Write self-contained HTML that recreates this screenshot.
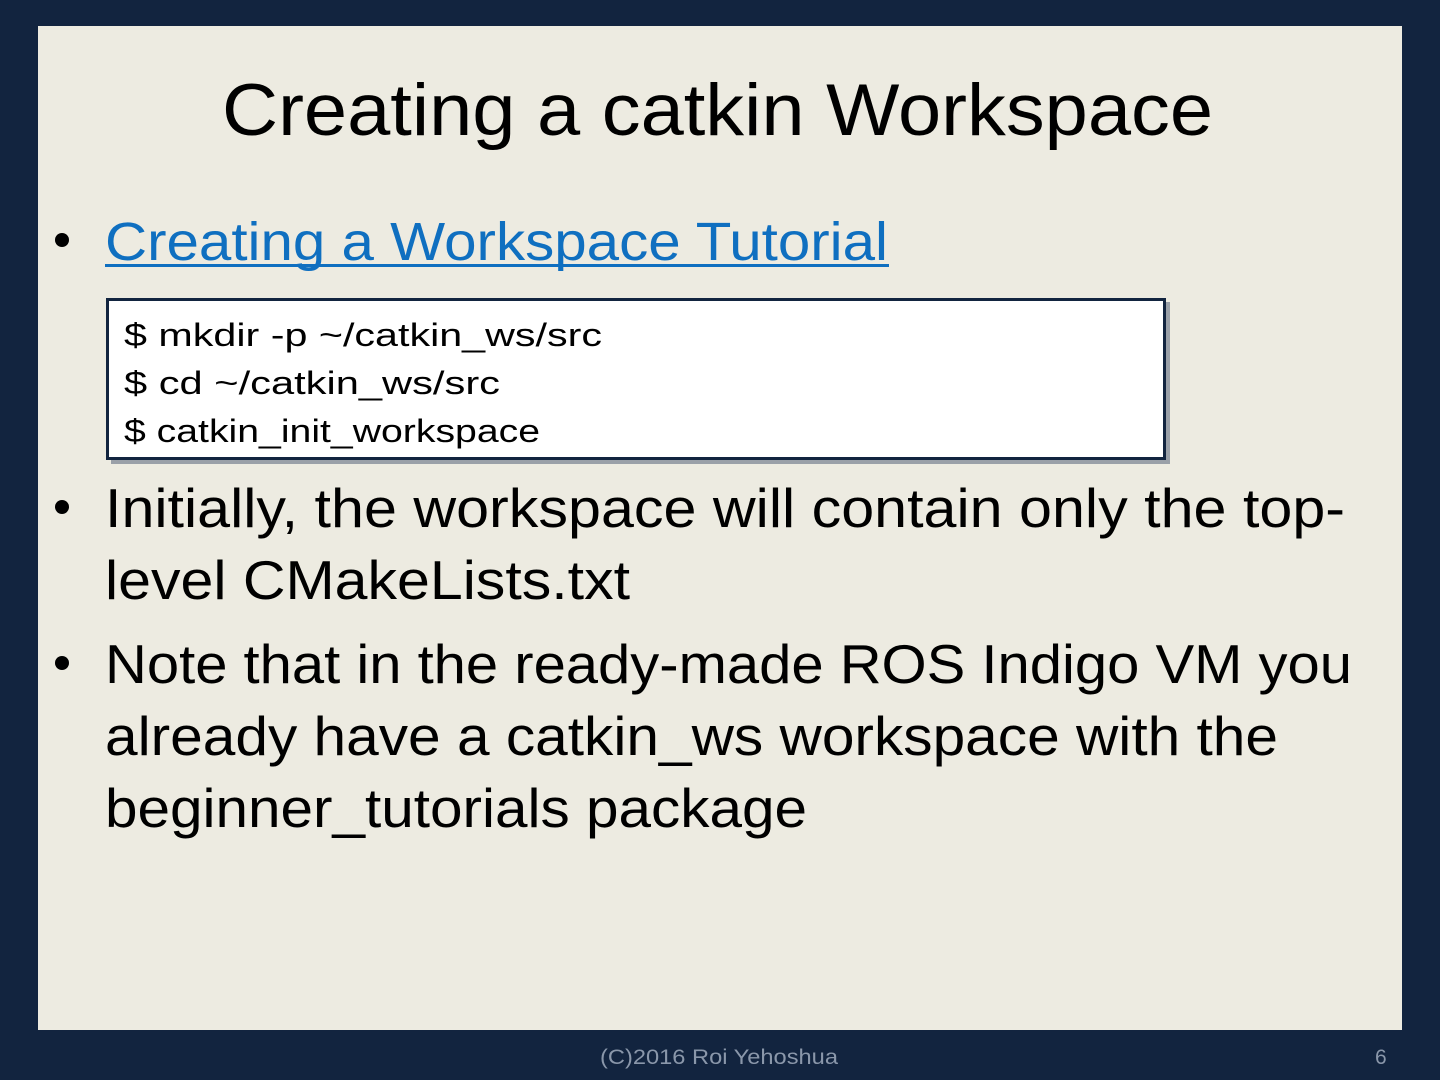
<!DOCTYPE html>
<html><head><meta charset="utf-8"><style>html,body{margin:0;padding:0;background:#12243f;}svg{display:block}</style></head>
<body>
<svg width="1440" height="1080" viewBox="0 0 1440 1080" xmlns="http://www.w3.org/2000/svg" font-family="Liberation Sans, sans-serif">
<rect x="0" y="0" width="1440" height="1080" fill="#12243f"/>
<rect x="38" y="26" width="1364" height="1004" fill="#edebe1"/>
<text x="222" y="135" font-size="73" fill="#000" textLength="991" lengthAdjust="spacingAndGlyphs">Creating a catkin Workspace</text>
<circle cx="62" cy="240" r="7" fill="#000"/>
<text x="105" y="260" font-size="54" fill="#0f6fc0" textLength="783" lengthAdjust="spacingAndGlyphs">Creating a Workspace Tutorial</text>
<rect x="105" y="264" width="784" height="3" fill="#0f6fc0"/>
<rect x="111" y="302" width="1059" height="162" fill="#9aa0a8"/>
<rect x="107.5" y="299.5" width="1057" height="159" fill="#fff" stroke="#12243f" stroke-width="3"/>
<g font-size="32" fill="#000">
<text x="124" y="346" textLength="478" lengthAdjust="spacingAndGlyphs">$ mkdir -p ~/catkin_ws/src</text>
<text x="124" y="394" textLength="376" lengthAdjust="spacingAndGlyphs">$ cd ~/catkin_ws/src</text>
<text x="124" y="442" textLength="416" lengthAdjust="spacingAndGlyphs">$ catkin_init_workspace</text>
</g>
<circle cx="62" cy="507" r="7" fill="#000"/>
<circle cx="62" cy="663" r="7" fill="#000"/>
<g font-size="55" fill="#000">
<text x="105" y="527" textLength="1240" lengthAdjust="spacingAndGlyphs">Initially, the workspace will contain only the top-</text>
<text x="105" y="599" textLength="525" lengthAdjust="spacingAndGlyphs">level CMakeLists.txt</text>
<text x="105" y="683" textLength="1247" lengthAdjust="spacingAndGlyphs">Note that in the ready-made ROS Indigo VM you</text>
<text x="105" y="755" textLength="1173" lengthAdjust="spacingAndGlyphs">already have a catkin_ws workspace with the</text>
<text x="105" y="827" textLength="702" lengthAdjust="spacingAndGlyphs">beginner_tutorials package</text>
</g>
<text x="600" y="1064" font-size="21" fill="#8a97aa" textLength="238" lengthAdjust="spacingAndGlyphs">(C)2016 Roi Yehoshua</text>
<text x="1375" y="1064" font-size="21" fill="#8a97aa">6</text>
</svg>
</body></html>
